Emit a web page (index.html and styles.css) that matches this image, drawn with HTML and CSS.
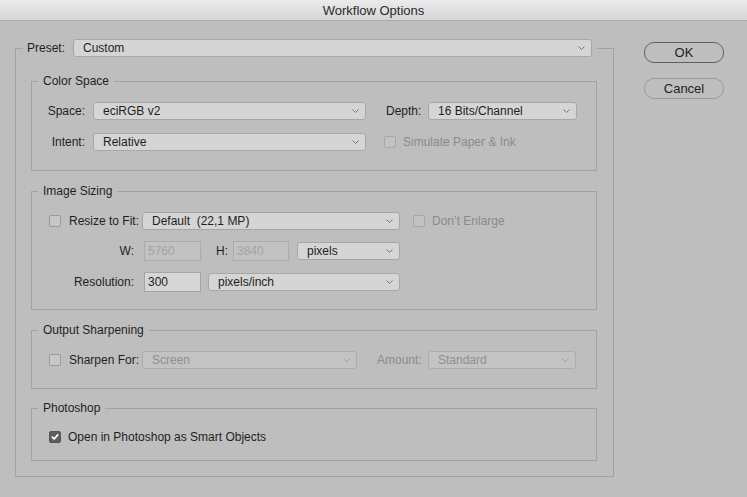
FILE: index.html
```html
<!DOCTYPE html>
<html>
<head>
<meta charset="utf-8">
<title>Workflow Options</title>
<link rel="stylesheet" href="styles.css">
</head>
<body>
<div class="titlebar">Workflow Options</div>
<div class="main">
  <fieldset class="outer">
    <legend class="preset-legend">
      <span class="preset-label">Preset:</span>
      <div class="select preset-select"><span>Custom</span><svg class="chev" viewBox="0 0 7 4"><path d="M0.5 0.5 L3.5 3.5 L6.5 0.5"/></svg></div>
    </legend>

    <fieldset class="group color">
      <legend>Color Space</legend>
      <div class="cs-grid">
        <div class="lbl">Space:</div>
        <div class="select"><span>eciRGB v2</span><svg class="chev" viewBox="0 0 7 4"><path d="M0.5 0.5 L3.5 3.5 L6.5 0.5"/></svg></div>
        <div></div>
        <div class="depth-lbl">Depth:</div>
        <div class="select"><span>16 Bits/Channel</span><svg class="chev" viewBox="0 0 7 4"><path d="M0.5 0.5 L3.5 3.5 L6.5 0.5"/></svg></div>

        <div class="lbl">Intent:</div>
        <div class="select"><span>Relative</span><svg class="chev" viewBox="0 0 7 4"><path d="M0.5 0.5 L3.5 3.5 L6.5 0.5"/></svg></div>
        <div></div>
        <div class="check-item disabled sim"><span class="cb"></span><span>Simulate Paper &amp; Ink</span></div>
      </div>
    </fieldset>

    <fieldset class="group sizing">
      <legend>Image Sizing</legend>
      <div class="rows">
        <div class="row cb-row">
          <span class="cb"></span>
          <span class="row-lbl">Resize to Fit:</span>
          <div class="select w258"><span>Default&nbsp; (22,1 MP)</span><svg class="chev" viewBox="0 0 7 4"><path d="M0.5 0.5 L3.5 3.5 L6.5 0.5"/></svg></div>
          <div class="check-item disabled enlarge"><span class="cb"></span><span>Don’t Enlarge</span></div>
        </div>
        <div class="row">
          <span class="num-lbl">W:</span>
          <div class="input disabled w57">5760</div>
          <span class="h-lbl">H:</span>
          <div class="input disabled w56">3840</div>
          <div class="select w103 ml8"><span>pixels</span><svg class="chev" viewBox="0 0 7 4"><path d="M0.5 0.5 L3.5 3.5 L6.5 0.5"/></svg></div>
        </div>
        <div class="row">
          <span class="num-lbl">Resolution:</span>
          <div class="input w57">300</div>
          <div class="select w192 ml7"><span>pixels/inch</span><svg class="chev" viewBox="0 0 7 4"><path d="M0.5 0.5 L3.5 3.5 L6.5 0.5"/></svg></div>
        </div>
      </div>
    </fieldset>

    <fieldset class="group sharpen">
      <legend>Output Sharpening</legend>
      <div class="row cb-row">
        <span class="cb"></span>
        <span class="row-lbl">Sharpen For:</span>
        <div class="select disabled w215"><span>Screen</span><svg class="chev" viewBox="0 0 7 4"><path d="M0.5 0.5 L3.5 3.5 L6.5 0.5"/></svg></div>
        <span class="amount-lbl">Amount:</span>
        <div class="select disabled w148"><span>Standard</span><svg class="chev" viewBox="0 0 7 4"><path d="M0.5 0.5 L3.5 3.5 L6.5 0.5"/></svg></div>
      </div>
    </fieldset>

    <fieldset class="group photoshop">
      <legend>Photoshop</legend>
      <div class="row cb-row ps-row">
        <span class="cb checked"><svg viewBox="0 0 12 12"><path d="M2.8 6.2 L5 8.4 L9.3 3.4"/></svg></span>
        <span>Open in Photoshop as Smart Objects</span>
      </div>
    </fieldset>
  </fieldset>

  <div class="buttons">
    <div class="btn default">OK</div>
    <div class="btn">Cancel</div>
  </div>
</div>
</body>
</html>
```

FILE: styles.css
```css
* { box-sizing: border-box; }
html, body { margin: 0; padding: 0; }
body {
  width: 747px;
  height: 497px;
  overflow: hidden;
  background: #bebebe;
  font-family: "Liberation Sans", Arial, Helvetica, sans-serif;
  font-size: 12px;
  color: #1e1e1e;
}

.titlebar {
  height: 21px;
  border-bottom: 1px solid #aaaaaa;
  background: linear-gradient(#ebebeb, #d6d6d6);
  text-align: center;
  font-size: 13px;
  line-height: 21px;
  color: #2a2a2a;
}

.main {
  display: flex;
  align-items: flex-start;
  padding: 18px 0 0 15px;
  gap: 30px;
}

fieldset {
  margin: 0;
  min-width: 0;
  border: 1px solid #a2a2a2;
}

.outer {
  width: 599px;
  padding: 17px 16px 15px 15px;
}
.outer > legend {
  margin-left: -8px;
  padding: 0 5px 0 4px;
  display: flex;
  align-items: center;
  height: 18px;
}
.preset-label { width: 46px; }
.preset-select { width: 519px; }

.group {
  padding: 13px 0 19px 0;
  margin: 0 0 13px 0;
}
.group > legend {
  margin-left: 6px;
  padding: 0 5px;
  height: 15px;
  line-height: 15px;
}
.group.sizing { padding-bottom: 17px; }
.group.sharpen { margin-bottom: 12px; }
.group.photoshop { margin-bottom: 0; padding-bottom: 16px; }

/* controls */
.select {
  display: flex;
  align-items: center;
  justify-content: space-between;
  height: 18px;
  padding: 0 6px 0 9px;
  border: 1px solid #a7a7a7;
  border-radius: 3px;
  background: #d5d5d5;
  white-space: nowrap;
}
.select.disabled {
  background: #c3c3c3;
  border-color: #acacac;
  color: #8f8f8f;
}
.chev {
  width: 7px;
  height: 4px;
  flex: none;
}
.chev path {
  fill: none;
  stroke: #777777;
  stroke-width: 1;
}
.select.disabled .chev path { stroke: #9d9d9d; }

.input {
  height: 20px;
  line-height: 18px;
  padding-left: 3px;
  border: 1px solid #a5a5a5;
  background: #d6d6d6;
}
.input.disabled {
  background: #c2c2c2;
  border-color: #acacac;
  color: #a3a3a3;
}

.cb {
  display: inline-flex;
  flex: none;
  width: 12px;
  height: 12px;
  border: 1px solid #9a9a9a;
  border-radius: 2px;
  background: #c7c7c7;
}
.disabled .cb {
  border-color: #a6a6a6;
  background: #c2c2c2;
}
.cb.checked {
  background: #5e5e5e;
  border-color: #555555;
}
.cb.checked svg { width: 10px; height: 10px; }
.cb.checked path {
  fill: none;
  stroke: #ffffff;
  stroke-width: 2;
  stroke-linecap: round;
  stroke-linejoin: round;
}

.check-item {
  display: flex;
  align-items: center;
  gap: 7px;
  white-space: nowrap;
}
.check-item.disabled { color: #8b8b8b; }

/* Color Space */
.cs-grid {
  display: grid;
  grid-template-columns: 61px 273px 18px 44px 149px;
  grid-auto-rows: 18px;
  row-gap: 13px;
  align-items: center;
}
.lbl {
  text-align: right;
  padding-right: 8px;
}
.depth-lbl { padding-left: 2px; }
.sim { grid-column: 4 / span 2; }

/* rows */
.rows {
  display: flex;
  flex-direction: column;
  gap: 11px;
}
.row {
  display: flex;
  align-items: center;
  white-space: nowrap;
}
.cb-row {
  height: 18px;
  padding-left: 17px;
}
.cb-row > .cb { margin-right: 8px; }
.row-lbl { width: 73px; }
.enlarge { margin-left: 13px; }

.num-lbl {
  width: 112px;
  text-align: right;
  padding-right: 10px;
}
.h-lbl {
  width: 32px;
  text-align: right;
  padding-right: 5px;
}
.amount-lbl {
  width: 71px;
  padding-left: 20px;
  color: #8b8b8b;
}

.w57 { width: 57px; }
.w56 { width: 56px; }
.w103 { width: 103px; }
.w192 { width: 192px; }
.w215 { width: 215px; }
.w148 { width: 148px; }
.w258 { width: 258px; }
.ml8 { margin-left: 8px; }
.ml7 { margin-left: 7px; }

.ps-row { height: 15px; }
.ps-row > .cb { margin-right: 7px; }

/* buttons */
.buttons {
  display: flex;
  flex-direction: column;
  gap: 15px;
  padding-top: 3px;
}
.btn {
  width: 80px;
  height: 21px;
  border: 1px solid #9a9a9a;
  border-radius: 10px;
  text-align: center;
  font-size: 13px;
  line-height: 19px;
  color: #1e1e1e;
}
.btn.default {
  border-color: #5f5f5f;
}
```
